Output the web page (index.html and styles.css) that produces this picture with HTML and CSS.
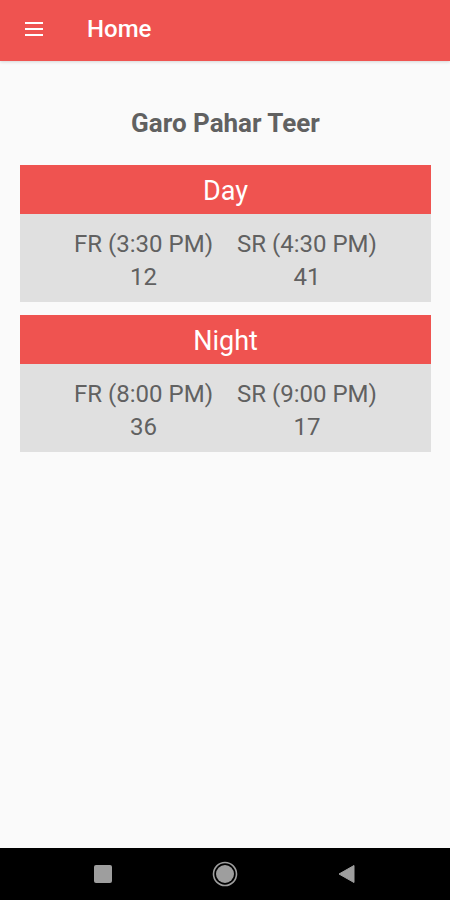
FILE: index.html
```html
<!DOCTYPE html>
<html lang="en">
<head>
    <meta charset="UTF-8">
    <title>Home</title>
    <link rel="stylesheet" href="styles.css">
</head>
<body>
    <div class="app">
        <!-- barra superior -->
        <header class="toolbar">
            <svg class="menu-icon" width="24" height="24" viewBox="0 0 24 24">
                <path d="M3 6h18M3 12h18M3 18h18" stroke="#fff" stroke-width="2.2" fill="none"/>
            </svg>
            <span class="toolbar-title">Home</span>
        </header>

        <main class="content">
            <h1 class="page-title">Garo Pahar Teer</h1>

            <div class="result-card">
                <div class="result-head">Day</div>
                <div class="result-body">
                    <div class="round">
                        <div>FR (3:30 PM)</div>
                        <div>12</div>
                    </div>
                    <div class="round">
                        <div>SR (4:30 PM)</div>
                        <div>41</div>
                    </div>
                </div>
            </div>

            <div class="result-card">
                <div class="result-head">Night</div>
                <div class="result-body">
                    <div class="round">
                        <div>FR (8:00 PM)</div>
                        <div>36</div>
                    </div>
                    <div class="round">
                        <div>SR (9:00 PM)</div>
                        <div>17</div>
                    </div>
                </div>
            </div>
        </main>

        <!-- barra de navegação do sistema -->
        <nav class="navbar">
            <svg width="20" height="20" viewBox="0 0 20 20"><rect x="1" y="1" width="18" height="18" rx="2" fill="#9e9e9e"/></svg>
            <svg width="26" height="26" viewBox="0 0 26 26"><circle cx="13" cy="13" r="11.5" fill="none" stroke="#9e9e9e" stroke-width="1.6"/><circle cx="13" cy="13" r="9" fill="#9e9e9e"/></svg>
            <svg width="20" height="20" viewBox="0 0 20 20"><path d="M2 10 L17 1.5 L17 18.5 Z" fill="#9e9e9e" stroke="#9e9e9e" stroke-linejoin="round" stroke-width="1"/></svg>
        </nav>
    </div>
</body>
</html>
```

FILE: styles.css
```css
/* layout geral */
body { margin: 0; font-family: Roboto, "Noto Sans", Arial, sans-serif; background: #fafafa; }
.app { height: 900px; display: flex; flex-direction: column; }

.toolbar { height: 61px; box-sizing: border-box; padding: 0 0 3px 22px; background: #ef5350; display: flex; align-items: center; box-shadow: 0 1px 3px rgba(0,0,0,0.15); }
.menu-icon { margin-right: 41px; }
.toolbar-title { color: #fff; font-size: 24px; font-weight: 500; }

.content { flex: 1; padding: 0 19px 0 20px; }
.page-title { margin: 47px 0 27px; text-align: center; font-size: 26px; font-weight: 700; color: #616161; line-height: 30px; }

.result-card { margin-bottom: 13px; }
.result-head { height: 49px; background: #ef5350; color: #fff; text-align: center; font-size: 27px; line-height: 52px; }
.result-body { background: #e0e0e0; display: flex; justify-content: center; gap: 24px; padding: 14px 0 8px; color: #616161; font-size: 24px; line-height: 33px; }
.round { text-align: center; }

.navbar { height: 52px; background: #000; display: flex; align-items: center; justify-content: space-between; padding: 0 93px 0 93px; }
```
